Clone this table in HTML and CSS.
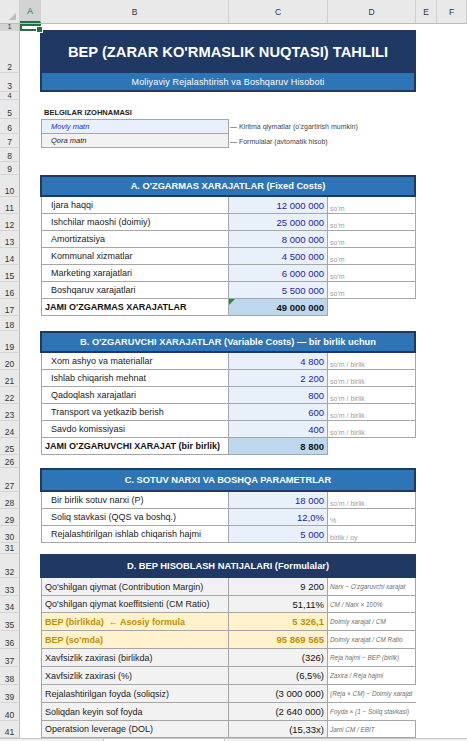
FILE: index.html
```html
<!DOCTYPE html>
<html lang="en">
<head>
    <meta charset="UTF-8">
    <meta name="viewport" content="width=device-width, initial-scale=1.0">
    <title>BEP tahlili</title>
    <link rel="stylesheet" href="styles.css">
</head>
<body>
    <div class="sheet">
        <div class="colhead">
            <div class="corner"><span class="corner-tri"></span></div>
            <div class="sel">A</div>
            <div>B</div>
            <div>C</div>
            <div>D</div>
            <div>E</div>
            <div>F</div>
        </div>

        <div class="row r7"><div class="rh sel">1</div><div class="ca cursor"><span class="handle"></span></div></div>
        <div class="row r42"><div class="rh">2</div><div class="title">BEP (ZARAR KO'RMASLIK NUQTASI) TAHLILI</div></div>
        <div class="row r19"><div class="rh">3</div><div class="subtitle">Moliyaviy Rejalashtirish va Boshqaruv Hisoboti</div></div>
        <div class="row r8"><div class="rh">4</div></div>
        <div class="row r19"><div class="rh">5</div><div class="cb legend-title">BELGILAR IZOHNAMASI</div></div>
        <div class="row r15"><div class="rh">6</div><div class="cb legend blue first">Moviy matn</div><div class="cc legend-note">— Kiritma qiymatlar (o'zgartirish mumkin)</div></div>
        <div class="row r14"><div class="rh">7</div><div class="cb legend grey">Qora matn</div><div class="cc legend-note">— Formulalar (avtomatik hisob)</div></div>
        <div class="row r14"><div class="rh">8</div></div>
        <div class="row r13"><div class="rh">9</div></div>

        <div class="row r22"><div class="rh">10</div><div class="sec">A. O'ZGARMAS XARAJATLAR (Fixed Costs)</div></div>
        <div class="row r17"><div class="rh">11</div><div class="cb lab">Ijara haqqi</div><div class="cc val">12 000 000</div><div class="cd unit">so'm</div></div>
        <div class="row r17"><div class="rh">12</div><div class="cb lab">Ishchilar maoshi (doimiy)</div><div class="cc val">25 000 000</div><div class="cd unit">so'm</div></div>
        <div class="row r17"><div class="rh">13</div><div class="cb lab">Amortizatsiya</div><div class="cc val">8 000 000</div><div class="cd unit">so'm</div></div>
        <div class="row r17"><div class="rh">14</div><div class="cb lab">Kommunal xizmatlar</div><div class="cc val">4 500 000</div><div class="cd unit">so'm</div></div>
        <div class="row r17"><div class="rh">15</div><div class="cb lab">Marketing xarajatlari</div><div class="cc val">6 000 000</div><div class="cd unit">so'm</div></div>
        <div class="row r17"><div class="rh">16</div><div class="cb lab">Boshqaruv xarajatlari</div><div class="cc val">5 500 000</div><div class="cd unit">so'm</div></div>
        <div class="row r17"><div class="rh">17</div><div class="cb lab tot">JAMI O'ZGARMAS XARAJATLAR</div><div class="cc val tot flag">49 000 000</div></div>
        <div class="row r15"><div class="rh">18</div></div>

        <div class="row r22"><div class="rh">19</div><div class="sec">B. O'ZGARUVCHI XARAJATLAR (Variable Costs) — bir birlik uchun</div></div>
        <div class="row r17"><div class="rh">20</div><div class="cb lab">Xom ashyo va materiallar</div><div class="cc val">4 800</div><div class="cd unit">so'm / birlik</div></div>
        <div class="row r17"><div class="rh">21</div><div class="cb lab">Ishlab chiqarish mehnat</div><div class="cc val">2 200</div><div class="cd unit">so'm / birlik</div></div>
        <div class="row r17"><div class="rh">22</div><div class="cb lab">Qadoqlash xarajatlari</div><div class="cc val">800</div><div class="cd unit">so'm / birlik</div></div>
        <div class="row r17"><div class="rh">23</div><div class="cb lab">Transport va yetkazib berish</div><div class="cc val">600</div><div class="cd unit">so'm / birlik</div></div>
        <div class="row r17"><div class="rh">24</div><div class="cb lab">Savdo komissiyasi</div><div class="cc val">400</div><div class="cd unit">so'm / birlik</div></div>
        <div class="row r17"><div class="rh">25</div><div class="cb lab tot">JAMI O'ZGARUVCHI XARAJAT (bir birlik)</div><div class="cc val tot">8 800</div></div>
        <div class="row r13"><div class="rh">26</div></div>

        <div class="row r24"><div class="rh">27</div><div class="sec">C. SOTUV NARXI VA BOSHQA PARAMETRLAR</div></div>
        <div class="row r17"><div class="rh">28</div><div class="cb lab">Bir birlik sotuv narxi (P)</div><div class="cc val">18 000</div><div class="cd unit">so'm / birlik</div></div>
        <div class="row r17"><div class="rh">29</div><div class="cb lab">Soliq stavkasi (QQS va boshq.)</div><div class="cc val">12,0%</div><div class="cd unit">%</div></div>
        <div class="row r17"><div class="rh">30</div><div class="cb lab">Rejalashtirilgan ishlab chiqarish hajmi</div><div class="cc val">5 000</div><div class="cd unit">birlik / oy</div></div>
        <div class="row r11"><div class="rh">31</div></div>

        <div class="row r24"><div class="rh">32</div><div class="sec dark">D. BEP HISOBLASH NATIJALARI (Formulalar)</div></div>
        <div class="row r18"><div class="rh">33</div><div class="cb lab calc">Qo'shilgan qiymat (Contribution Margin)</div><div class="cc val calc">9 200</div><div class="cd unit formula">Narx − O'zgaruvchi xarajat</div></div>
        <div class="row r17"><div class="rh">34</div><div class="cb lab calc">Qo'shilgan qiymat koeffitsienti (CM Ratio)</div><div class="cc val calc">51,11%</div><div class="cd unit formula">CM / Narx × 100%</div></div>
        <div class="row r18"><div class="rh">35</div><div class="cb lab key">BEP (birlikda) &nbsp;← Asosiy formula</div><div class="cc val key">5 326,1</div><div class="cd unit formula">Doimiy xarajat / CM</div></div>
        <div class="row r18"><div class="rh">36</div><div class="cb lab key">BEP (so'mda)</div><div class="cc val key">95 869 565</div><div class="cd unit formula">Doimiy xarajat / CM Ratio</div></div>
        <div class="row r18"><div class="rh">37</div><div class="cb lab calc">Xavfsizlik zaxirasi (birlikda)</div><div class="cc val calc">(326)</div><div class="cd unit formula">Reja hajmi − BEP (birlik)</div></div>
        <div class="row r18"><div class="rh">38</div><div class="cb lab calc">Xavfsizlik zaxirasi (%)</div><div class="cc val calc">(6,5%)</div><div class="cd unit formula">Zaxira / Reja hajmi</div></div>
        <div class="row r18"><div class="rh">39</div><div class="cb lab calc">Rejalashtirilgan foyda (soliqsiz)</div><div class="cc val calc">(3 000 000)</div><div class="cd unit formula open">(Reja × CM) − Doimiy xarajat</div></div>
        <div class="row r18"><div class="rh">40</div><div class="cb lab calc">Soliqdan keyin sof foyda</div><div class="cc val calc">(2 640 000)</div><div class="cd unit formula open">Foyda × (1 − Soliq stavkasi)</div></div>
        <div class="row r17"><div class="rh">41</div><div class="cb lab calc">Operatsion leverage (DOL)</div><div class="cc val calc">(15,33x)</div><div class="cd unit formula">Jami CM / EBIT</div></div>
        <div class="tabs"><div class="tab"></div></div>
    </div>
</body>
</html>
```

FILE: styles.css
```css
body {
    margin: 0;
    font-family: "Liberation Sans", Arial, sans-serif;
    background: #fff;
    color: #222;
}
.sheet {
    width: 467px;
    height: 741px;
    overflow: hidden;
}
.colhead,
.row {
    display: grid;
    grid-template-columns: 20px 21px 188px 99px 88px 21px 1fr;
}
.colhead {
    height: 24px;
    background: #e9e9e9;
    border-bottom: 1px solid #bdbdbd;
    box-sizing: border-box;
}
.colhead div {
    border-right: 1px solid #d0d0d0;
    font-size: 8.5px;
    color: #333;
    display: flex;
    align-items: center;
    justify-content: center;
}
.colhead .sel {
    background: #d3d3d3;
    border-bottom: 2px solid #217346;
    color: #217346;
}
.corner {
    position: relative;
}
.corner-tri {
    position: absolute;
    right: 3px;
    bottom: 3px;
    border-left: 7px solid transparent;
    border-bottom: 7px solid #bdbdbd;
}
.r7 { height: 7px; }
.r8 { height: 8px; }
.r11 { height: 11px; }
.r13 { height: 13px; }
.r14 { height: 14px; }
.r15 { height: 15px; }
.r17 { height: 17px; }
.r18 { height: 18px; }
.r19 { height: 19px; }
.r22 { height: 22px; }
.r24 { height: 24px; }
.r42 { height: 42px; }
.rh {
    grid-column: 1;
    background: #e9e9e9;
    border-right: 1px solid #bdbdbd;
    border-bottom: 1px solid #d4d4d4;
    box-sizing: border-box;
    font-size: 8.5px;
    color: #333;
    display: flex;
    align-items: flex-end;
    justify-content: center;
    overflow: hidden;
    line-height: 10px;
}
.r7 .rh,
.r8 .rh {
    font-size: 7.5px;
    line-height: 7px;
}
.rh.sel {
    background: #d3d3d3;
}
.ca { grid-column: 2; }
.cb { grid-column: 3; }
.cc { grid-column: 4; }
.cd { grid-column: 5; }
.cursor {
    border: 2px solid #217346;
    box-sizing: border-box;
    position: relative;
}
.handle {
    position: absolute;
    right: -4px;
    bottom: -4px;
    width: 5px;
    height: 5px;
    background: #217346;
    border: 1px solid #fff;
    z-index: 2;
}

/* title block */
.title {
    grid-column: 3 / 6;
    margin-left: -1px;
    margin-top: -1px;
    background: #1f3864;
    color: #fff;
    font-weight: bold;
    font-size: 14.7px;
    display: flex;
    align-items: center;
    justify-content: center;
}
.subtitle {
    grid-column: 3 / 6;
    margin-left: -1px;
    background: #2e75b6;
    border: 2px solid #1f3864;
    border-top: none;
    color: #fff;
    font-size: 9px;
    letter-spacing: 0.15px;
    display: flex;
    align-items: center;
    justify-content: center;
}

/* legend */
.legend-title {
    font-size: 7.5px;
    font-weight: bold;
    color: #222;
    padding-left: 3px;
    display: flex;
    align-items: flex-end;
    padding-bottom: 2px;
}
.legend {
    font-size: 7.5px;
    font-style: italic;
    padding-left: 9px;
    display: flex;
    align-items: center;
    border: 1px solid #a6a6a6;
    border-top: none;
}
.legend.first {
    border-top: 1px solid #a6a6a6;
}
.legend.blue {
    background: #e8f0fb;
    color: #2b2bc0;
}
.legend.grey {
    background: #f2f2f2;
    color: #222;
}
.legend-note {
    grid-column: 4 / 7;
    font-size: 7px;
    color: #444;
    display: flex;
    align-items: center;
    white-space: nowrap;
    padding-left: 1px;
}

/* section headers */
.sec {
    grid-column: 3 / 6;
    margin-left: -1px;
    background: #2e75b6;
    border: 2px solid #1f3864;
    box-sizing: border-box;
    color: #fff;
    font-weight: bold;
    font-size: 9.3px;
    display: flex;
    align-items: center;
    justify-content: center;
}
.sec.dark {
    background: #1f3864;
}

/* data rows */
.lab {
    border-left: 1px solid #a6a6a6;
    border-right: 1px solid #a6a6a6;
    border-bottom: 1px solid #a6a6a6;
    box-sizing: border-box;
    padding-left: 9px;
    font-size: 9px;
    color: #222;
    display: flex;
    align-items: center;
    white-space: nowrap;
}
.val {
    background: #e8f0fb;
    border-right: 1px solid #a6a6a6;
    border-bottom: 1px solid #a6a6a6;
    box-sizing: border-box;
    padding-right: 3px;
    font-size: 9.5px;
    color: #2323a8;
    display: flex;
    align-items: center;
    justify-content: flex-end;
    white-space: nowrap;
}
.unit {
    border-right: 1px solid #a6a6a6;
    border-bottom: 1px solid #a6a6a6;
    box-sizing: border-box;
    padding-left: 2px;
    padding-bottom: 1px;
    font-size: 7px;
    color: #a0a0a0;
    display: flex;
    align-items: flex-end;
    white-space: nowrap;
}
.lab.tot {
    padding-left: 3px;
    font-weight: bold;
    color: #111;
}
.val.tot {
    background: #bdd7ee;
    font-weight: bold;
    color: #111;
}
.flag {
    position: relative;
}
.flag::before {
    content: "";
    position: absolute;
    left: 0;
    top: 0;
    border-top: 6px solid #1e8a3c;
    border-right: 6px solid transparent;
}
.lab.calc {
    background: #f2f2f2;
    padding-left: 3px;
}
.val.calc {
    background: #f2f2f2;
    color: #111;
}
.lab.key {
    background: #fff2cc;
    padding-left: 3px;
    color: #bf9000;
    font-weight: bold;
}
.val.key {
    background: #fff2cc;
    color: #bf9000;
    font-weight: bold;
}
.unit.formula {
    font-style: italic;
    font-size: 6.4px;
    color: #6f6f6f;
    align-items: center;
    padding-bottom: 0;
    overflow: visible;
}
.unit.formula.open {
    border-right: none;
}

.tabs {
    height: 10px;
    background: #f0f0f0;
    border-top: 1px solid #c6c6c6;
    padding-left: 103px;
}
.tab {
    width: 120px;
    height: 8px;
    background: #fff;
    border-left: 1px solid #c6c6c6;
    border-right: 1px solid #c6c6c6;
}
```
